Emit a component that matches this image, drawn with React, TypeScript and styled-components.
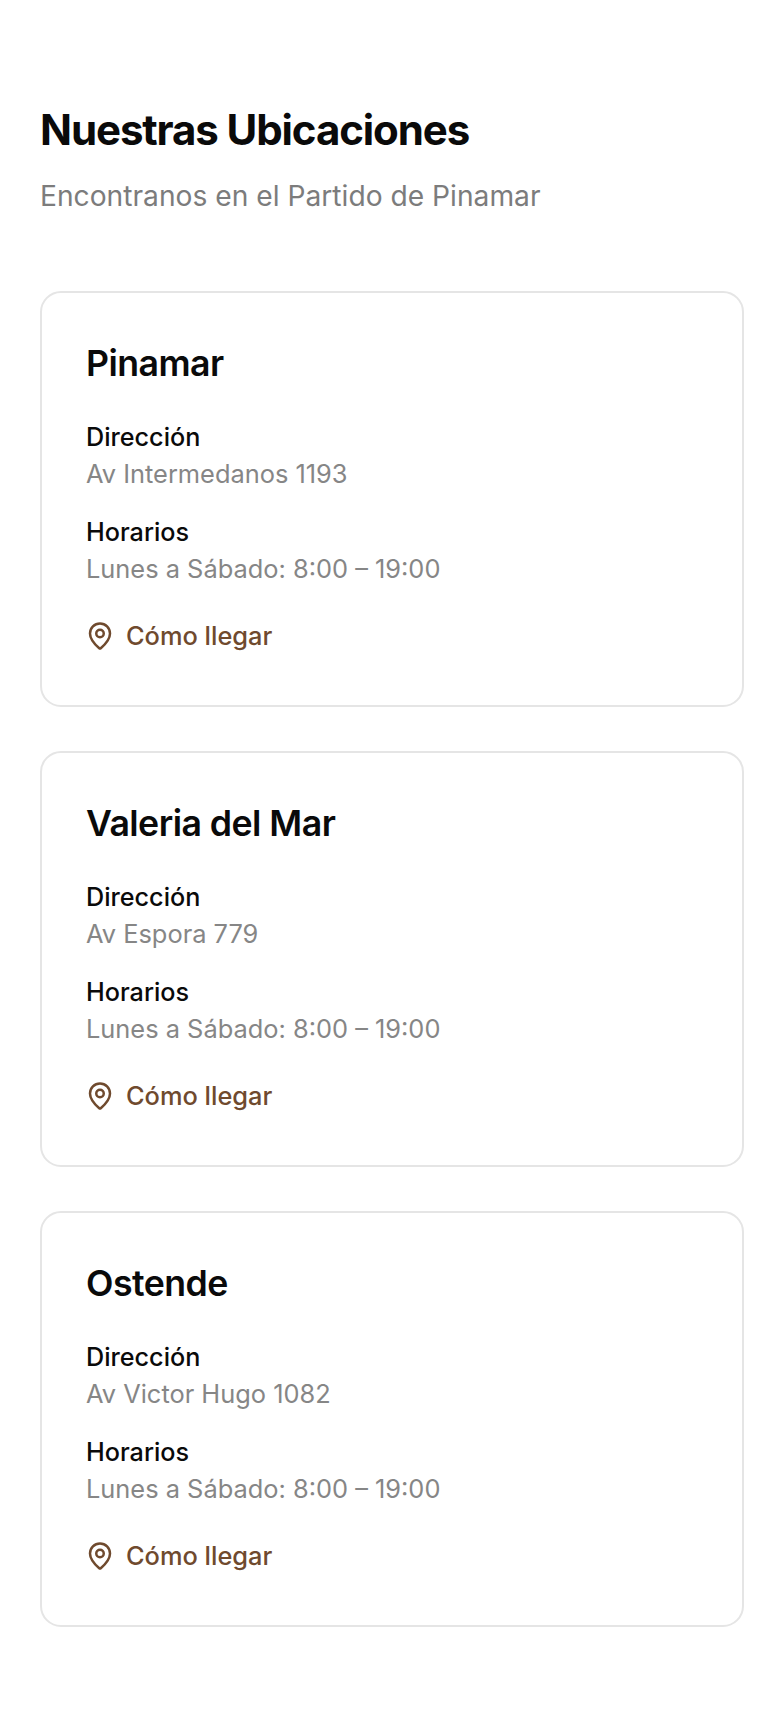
import React from 'react';
import styled, { createGlobalStyle } from 'styled-components';
import { MapPin } from 'lucide-react';

const GlobalStyle = createGlobalStyle`
  html, body {
    margin: 0;
    padding: 0;
    background: #fff;
    font-family: Inter, "Liberation Sans", sans-serif;
  }
`;

const Page = styled.main`
  padding: 105px 40px 84px;
`;

const Title = styled.h1`
  margin: 0;
  font-size: 42px;
  line-height: 50px;
  font-weight: 700;
  letter-spacing: -1.1px;
  color: #0a0a0a;
`;

const Subtitle = styled.p`
  margin: 22px 0 0;
  font-size: 28.2px;
  line-height: 38px;
  color: #7c7c7c;
`;

const CardList = styled.div`
  margin-top: 76px;
  display: flex;
  flex-direction: column;
  gap: 44px;
`;

const Card = styled.section`
  height: 416px;
  box-sizing: border-box;
  padding: 49px 44px 0;
  border: 2px solid #e5e5e5;
  border-radius: 21px;
  display: flex;
  flex-direction: column;
`;

const CardTitle = styled.h2`
  margin: 0;
  font-size: 35.7px;
  line-height: 42px;
  font-weight: 600;
  letter-spacing: -0.55px;
  color: #0a0a0a;
`;

const Block = styled.div`
  margin-top: ${(p: { $top: number }) => p.$top}px;
`;

const Label = styled.div`
  font-size: 25.2px;
  line-height: 36px;
  font-weight: 450;
  color: #0a0a0a;
`;

const Value = styled.div`
  font-size: 25.4px;
  line-height: 37px;
  color: #868686;
`;

const DirectionsLink = styled.a`
  margin-top: 31px;
  display: flex;
  align-items: center;
  gap: 11px;
  font-size: 25.4px;
  line-height: 36px;
  font-weight: 450;
  color: #6f4a2e;
  text-decoration: none;
`;

const PinIcon = styled(MapPin)`
  margin-left: -1px;
`;

const locations = [
  { name: 'Pinamar', address: 'Av Intermedanos 1193' },
  { name: 'Valeria del Mar', address: 'Av Espora 779' },
  { name: 'Ostende', address: 'Av Victor Hugo 1082' },
];

const App: React.FC = () => (
  <Page>
    <GlobalStyle />
    <Title>Nuestras Ubicaciones</Title>
    <Subtitle>Encontranos en el Partido de Pinamar</Subtitle>
    <CardList>
      {locations.map((location) => (
        <Card key={location.name}>
          <CardTitle>{location.name}</CardTitle>
          <Block $top={35}>
            <Label>Dirección</Label>
            <Value>{location.address}</Value>
          </Block>
          <Block $top={22}>
            <Label>Horarios</Label>
            <Value>Lunes a Sábado: 8:00 – 19:00</Value>
          </Block>
          <DirectionsLink href="#">
            <PinIcon size={30} strokeWidth={2} />
            Cómo llegar
          </DirectionsLink>
        </Card>
      ))}
    </CardList>
  </Page>
);

export default App;
